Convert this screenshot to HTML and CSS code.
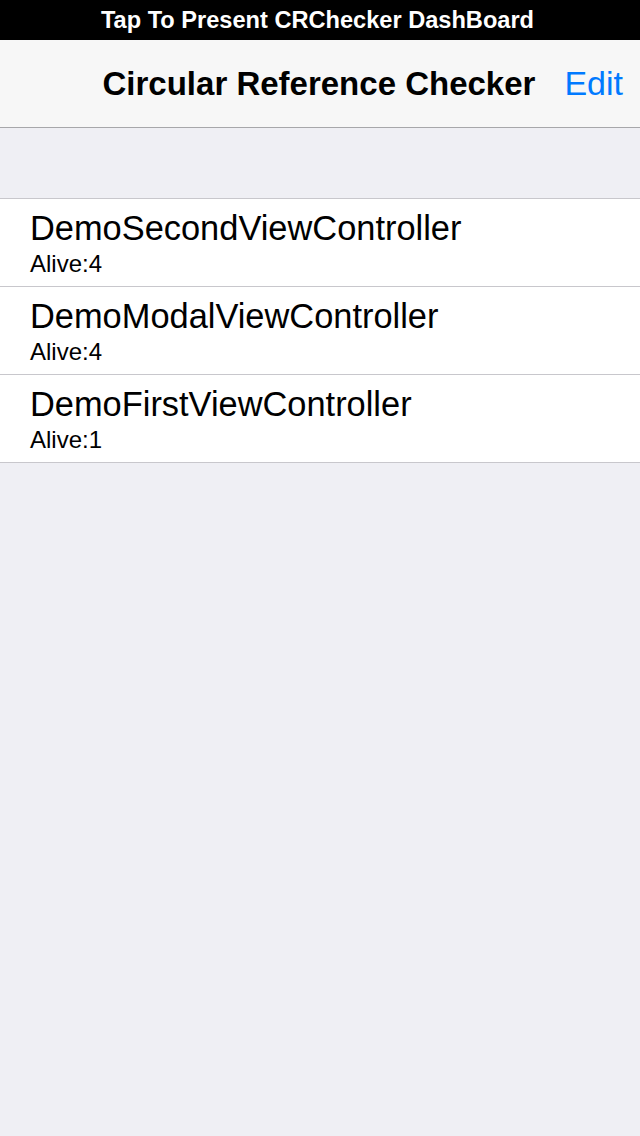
FILE: index.html
```html
<!DOCTYPE html>
<html>
<head>
<meta charset="utf-8">
<link rel="stylesheet" href="styles.css">
</head>
<body>
<div class="screen">
  <div class="statusbar">Tap To Present CRChecker DashBoard</div>
  <div class="navbar">
    <div class="nav-title">Circular Reference Checker</div>
    <div class="nav-edit">Edit</div>
  </div>
  <div class="spacer"></div>
  <ul class="table">
    <li class="cell">
      <div class="cell-title">DemoSecondViewController</div>
      <div class="cell-sub">Alive:4</div>
    </li>
    <li class="cell">
      <div class="cell-title">DemoModalViewController</div>
      <div class="cell-sub">Alive:4</div>
    </li>
    <li class="cell">
      <div class="cell-title">DemoFirstViewController</div>
      <div class="cell-sub">Alive:1</div>
    </li>
  </ul>
</div>
</body>
</html>
```

FILE: styles.css
```css
html, body {
  margin: 0;
  padding: 0;
  background: #efeff4;
}
body {
  font-family: "Liberation Sans", Arial, sans-serif;
}
.screen {
  width: 640px;
  height: 1136px;
  background: #efeff4;
  display: flex;
  flex-direction: column;
}
.statusbar {
  height: 40px;
  background: #000;
  color: #fff;
  font-weight: bold;
  font-size: 23.6px;
  display: flex;
  align-items: center;
  justify-content: center;
  padding-right: 5px;
}
.navbar {
  height: 87px;
  background: #f7f7f7;
  border-bottom: 1px solid #a7a7aa;
  display: flex;
  align-items: center;
  justify-content: flex-end;
  padding-right: 17px;
  gap: 29px;
}
.nav-title {
  font-weight: bold;
  font-size: 33px;
  color: #000;
}
.nav-edit {
  font-size: 34px;
  color: #007aff;
}
.spacer {
  height: 70px;
}
.table {
  list-style: none;
  margin: 0;
  padding: 0;
  background: #fff;
  border-top: 1px solid #c8c7cc;
  border-bottom: 1px solid #c8c7cc;
}
.cell {
  height: 87px;
  padding-left: 30px;
  display: flex;
  flex-direction: column;
  justify-content: center;
}
.cell + .cell {
  border-top: 1px solid #c8c7cc;
}
.cell-title {
  font-size: 34.4px;
  color: #000;
  line-height: 40px;
}
.cell-sub {
  font-size: 24px;
  color: #000;
  line-height: 28px;
  margin-top: 2px;
}
```
